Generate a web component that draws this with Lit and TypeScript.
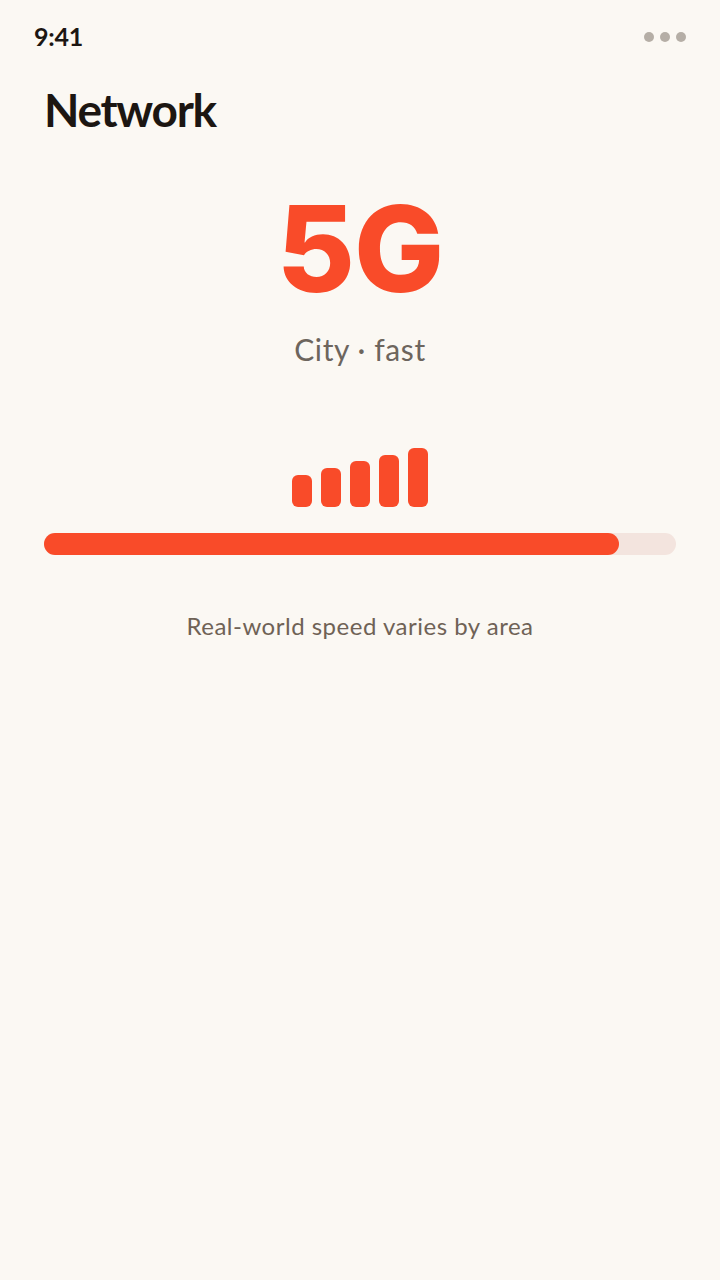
import { LitElement, html, css } from "lit";
import { customElement } from "lit/decorators.js";

@customElement("app-root")
export class AppRoot extends LitElement {
  static styles = css`
    :host { display: block; width: 720px; height: 1280px; background: #fbf8f3; font-family: "Lato", sans-serif; overflow: hidden; }
    .status { display: flex; justify-content: space-between; align-items: center; padding: 22px 34px 0; height: 30px; }
    .time { font-size: 25px; line-height: 28px; font-weight: 700; color: #1c1612; letter-spacing: -0.2px; margin-bottom: 2px; }
    .dots { display: flex; gap: 6px; }
    .dots i { width: 10px; height: 10px; border-radius: 50%; background: #b5aea6; display: block; }
    h1 { margin: 28px 0 0 44px; font-size: 46px; line-height: 60px; font-weight: 700; color: #1c1612; letter-spacing: -1.3px; }
    .hero { text-align: center; font-family: "Inter", sans-serif; font-weight: 850; font-size: 120px; letter-spacing: -1px; line-height: 150px; color: #f94b29; margin-top: 34px; }
    .sub { text-align: center; font-size: 30px; color: #6d655d; margin-top: 7px; letter-spacing: 0.6px; }
    .bars { display: flex; justify-content: center; align-items: flex-end; gap: 9px; margin-top: 80px; height: 60px; }
    .bars i { width: 20px; background: #f94b29; border-radius: 6px; display: block; }
    .track { margin: 26px 44px 0; height: 22px; border-radius: 11px; background: #f3e4de; }
    .fill { height: 100%; background: #f94b29; border-radius: 11px; }
    .note { text-align: center; font-size: 24px; color: #6f6256; margin-top: 56px; letter-spacing: 0.5px; }
  `;
  render() {
    return html`
      <div class="status"><span class="time">9:41</span><span class="dots"><i></i><i></i><i></i></span></div>
      <h1>Network</h1>
      <div class="hero">5G</div>
      <div class="sub">City · fast</div>
      <div class="bars">${[32, 39, 46, 52, 59].map((h) => html`<i style="height:${h}px"></i>`)}</div>
      <div class="track"><div class="fill" style="width:91%"></div></div>
      <div class="note">Real-world speed varies by area</div>
    `;
  }
}
